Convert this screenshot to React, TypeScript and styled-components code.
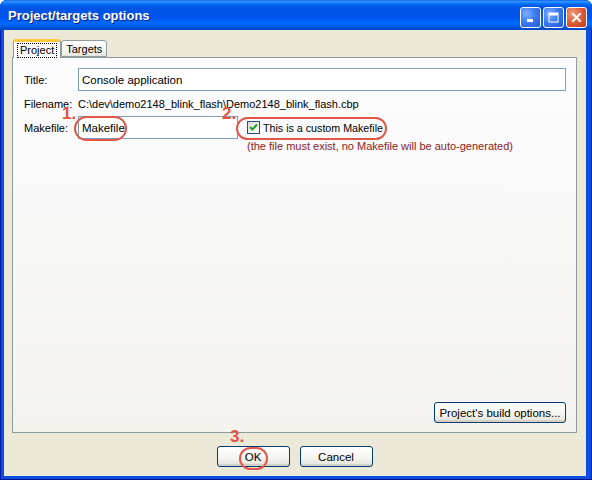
import React from "react";
import styled, { createGlobalStyle } from "styled-components";

const GlobalStyle = createGlobalStyle`
  html, body {
    margin: 0;
    padding: 0;
    background: #ffffff;
  }
  body {
    font-family: "Liberation Sans", Arial, sans-serif;
    font-size: 11px;
    color: #000;
  }
`;

const Window = styled.div`
  position: relative;
  width: 592px;
  height: 480px;
  display: flex;
  flex-direction: column;
  background: #0a4fe0;
  border-radius: 7px 7px 0 0;
  box-sizing: border-box;
  overflow: hidden;
  box-shadow: inset 1px 0 0 #0019a8, inset -1px 0 0 #001ea0, inset 0 -1px 0 #00138c;
`;

const TitleBar = styled.div`
  height: 30px;
  flex: none;
  display: flex;
  align-items: center;
  padding: 0 5px 0 8px;
  background: linear-gradient(
    to bottom,
    #0058ee 0%,
    #3593ff 4%,
    #288eff 7%,
    #127dff 10%,
    #036ffc 13%,
    #0262ee 17%,
    #0057e5 23%,
    #0054e3 28%,
    #0055eb 56%,
    #005bf5 66%,
    #026afe 76%,
    #0062ef 86%,
    #0052d6 92%,
    #0046c4 100%
  );
`;

const Caption = styled.div`
  flex: 1;
  color: #fff;
  font-weight: bold;
  font-size: 13px;
  text-shadow: 1px 1px 0 #0a1e80;
  padding-top: 1px;
`;

const Controls = styled.div`
  display: flex;
  gap: 2px;
  padding-top: 4px;
`;

const CtlButton = styled.div<{ $close?: boolean }>`
  width: 21px;
  height: 21px;
  box-sizing: border-box;
  border: 1px solid #fff;
  border-radius: 3px;
  display: flex;
  align-items: center;
  justify-content: center;
  background: ${({ $close }) =>
    $close
      ? "radial-gradient(circle at 30% 30%, #f19a7c 0%, #e0603b 45%, #c43a17 100%)"
      : "radial-gradient(circle at 30% 30%, #7fb1ff 0%, #3d7cf4 45%, #2157d6 100%)"};
`;

const Client = styled.div`
  flex: 1;
  margin: 0 6px 4px 4px;
  background: #ece9d8;
  display: flex;
  flex-direction: column;
  padding: 7px 9px 0 8px;
`;

const TabStrip = styled.div`
  display: flex;
  align-items: flex-end;
  height: 20px;
  padding-left: 1px;
  position: relative;
  z-index: 1;
`;

const Tab = styled.div<{ $active?: boolean }>`
  height: ${({ $active }) => ($active ? "19px" : "17px")};
  box-sizing: border-box;
  padding: 0 ${({ $active }) => ($active ? "4px" : "4px")};
  display: flex;
  align-items: center;
  border: 1px solid #919b9c;
  border-bottom: ${({ $active }) => ($active ? "none" : "1px solid #919b9c")};
  border-top: ${({ $active }) => ($active ? "3px solid #ffc73c" : "1px solid #919b9c")};
  border-radius: 3px 3px 0 0;
  margin-bottom: ${({ $active }) => ($active ? "-1px" : "0")};
  background: ${({ $active }) =>
    $active ? "#fcfcfe" : "linear-gradient(#fefefe, #f1f0ea 80%, #e6e4da)"};
  font-size: 11px;
  color: #000;
`;

const FocusText = styled.span`
  outline: 1px dotted #000;
  padding: 0 2px 1px 2px;
`;

const Panel = styled.div`
  flex: 1;
  border: 1px solid #919b9c;
  background: linear-gradient(#fcfcfe, #f4f3ee);
  padding: 10px 10px 9px 11px;
  display: flex;
  flex-direction: column;
`;

const Form = styled.div`
  display: grid;
  grid-template-columns: 54px 1fr;
  row-gap: 6px;
  align-items: start;
`;

const Label = styled.div<{ $h: number }>`
  height: ${({ $h }) => $h}px;
  display: flex;
  align-items: center;
  font-size: 11px;
  color: #000;
`;

const TextBox = styled.div<{ $width?: number }>`
  height: 23px;
  box-sizing: border-box;
  width: ${({ $width }) => ($width ? `${$width}px` : "100%")};
  border: 1px solid #7f9db9;
  background: #fff;
  display: flex;
  align-items: center;
  padding-left: 3px;
  font-size: 11.5px;
`;

const ValueText = styled.div`
  height: 13px;
  display: flex;
  align-items: center;
  font-size: 11px;
`;

const MakeRow = styled.div`
  display: flex;
  align-items: flex-start;
`;

const CheckCol = styled.div`
  display: flex;
  flex-direction: column;
  margin-left: 9px;
`;

const CheckRow = styled.div`
  height: 23px;
  display: flex;
  align-items: center;
  gap: 3px;
  font-size: 10.7px;
`;

const Box = styled.div`
  width: 13px;
  height: 13px;
  box-sizing: border-box;
  border: 1px solid #1c5180;
  background: linear-gradient(135deg, #dcdcd7, #ffffff);
  display: flex;
  align-items: center;
  justify-content: center;
`;

const Hint = styled.div`
  color: #8b1a1a;
  font-size: 11px;
  margin-top: 1px;
`;

const XpButton = styled.button<{ $w: number }>`
  width: ${({ $w }) => $w}px;
  height: 21px;
  box-sizing: border-box;
  border: 1px solid #003c74;
  border-radius: 3px;
  background: linear-gradient(#ffffff, #f3f3ef 60%, #e3e1d8);
  font-family: "Liberation Sans", Arial, sans-serif;
  font-size: 11.5px;
  color: #000;
  padding: 0;
  box-shadow: inset 0 -2px 0 #d6d0c5;
`;

const PanelFooter = styled.div`
  margin-top: auto;
  display: flex;
  justify-content: flex-end;
`;

const Footer = styled.div`
  height: 43px;
  display: flex;
  justify-content: center;
  align-items: flex-start;
  padding-top: 13px;
  box-sizing: border-box;
  gap: 10px;
`;

const Mark = styled.div<{ $x: number; $y: number }>`
  position: absolute;
  left: ${({ $x }) => $x}px;
  top: ${({ $y }) => $y}px;
  color: #e2533f;
  font-family: "Liberation Sans", Arial, sans-serif;
  font-size: 17px;
  font-weight: bold;
  line-height: 1;
`;

const Ring = styled.div<{ $x: number; $y: number; $w: number; $h: number }>`
  position: absolute;
  left: ${({ $x }) => $x}px;
  top: ${({ $y }) => $y}px;
  width: ${({ $w }) => $w}px;
  height: ${({ $h }) => $h}px;
  box-sizing: border-box;
  border: 2.5px solid #e0584a;
  border-radius: ${({ $h }) => $h / 2}px;
`;

export default function App() {
  return (
    <>
      <GlobalStyle />
      <Window>
        <TitleBar>
          <Caption>Project/targets options</Caption>
          <Controls>
            <CtlButton>
              <svg width="13" height="13" viewBox="0 0 13 13">
                <rect x="3" y="8" width="6" height="3" fill="#fff" />
              </svg>
            </CtlButton>
            <CtlButton>
              <svg width="13" height="13" viewBox="0 0 13 13">
                <rect x="2" y="2" width="9" height="9" fill="none" stroke="#fff" strokeWidth="1" />
                <rect x="2" y="2" width="9" height="2.5" fill="#fff" />
              </svg>
            </CtlButton>
            <CtlButton $close>
              <svg width="13" height="13" viewBox="0 0 13 13">
                <path d="M3 3 L10 10 M10 3 L3 10" stroke="#fff" strokeWidth="2" strokeLinecap="square" />
              </svg>
            </CtlButton>
          </Controls>
        </TitleBar>
        <Client>
          <TabStrip>
            <Tab $active>
              <FocusText>Project</FocusText>
            </Tab>
            <Tab>Targets</Tab>
          </TabStrip>
          <Panel>
            <Form>
              <Label $h={23}>Title:</Label>
              <TextBox>Console application</TextBox>
              <Label $h={13}>Filename:</Label>
              <ValueText>C:\dev\demo2148_blink_flash\Demo2148_blink_flash.cbp</ValueText>
              <Label $h={23}>Makefile:</Label>
              <MakeRow>
                <TextBox $width={160}>Makefile</TextBox>
                <CheckCol>
                  <CheckRow>
                    <Box>
                      <svg width="9" height="9" viewBox="0 0 9 9">
                        <path d="M1 4 L3.5 6.5 L8 1.5" fill="none" stroke="#21a121" strokeWidth="2" />
                      </svg>
                    </Box>
                    This is a custom Makefile
                  </CheckRow>
                  <Hint>(the file must exist, no Makefile will be auto-generated)</Hint>
                </CheckCol>
              </MakeRow>
            </Form>
            <PanelFooter>
              <XpButton $w={132}>Project's build options...</XpButton>
            </PanelFooter>
          </Panel>
          <Footer>
            <XpButton $w={73}>OK</XpButton>
            <XpButton $w={73}>Cancel</XpButton>
          </Footer>
        </Client>
        <Mark $x={62} $y={105}>1.</Mark>
        <Mark $x={222} $y={105}>2.</Mark>
        <Mark $x={230} $y={428}>3.</Mark>
        <Ring $x={74} $y={116} $w={53} $h={25} />
        <Ring $x={236} $y={117} $w={151} $h={23} />
        <Ring $x={239} $y={447} $w={29} $h={23} />
      </Window>
    </>
  );
}
